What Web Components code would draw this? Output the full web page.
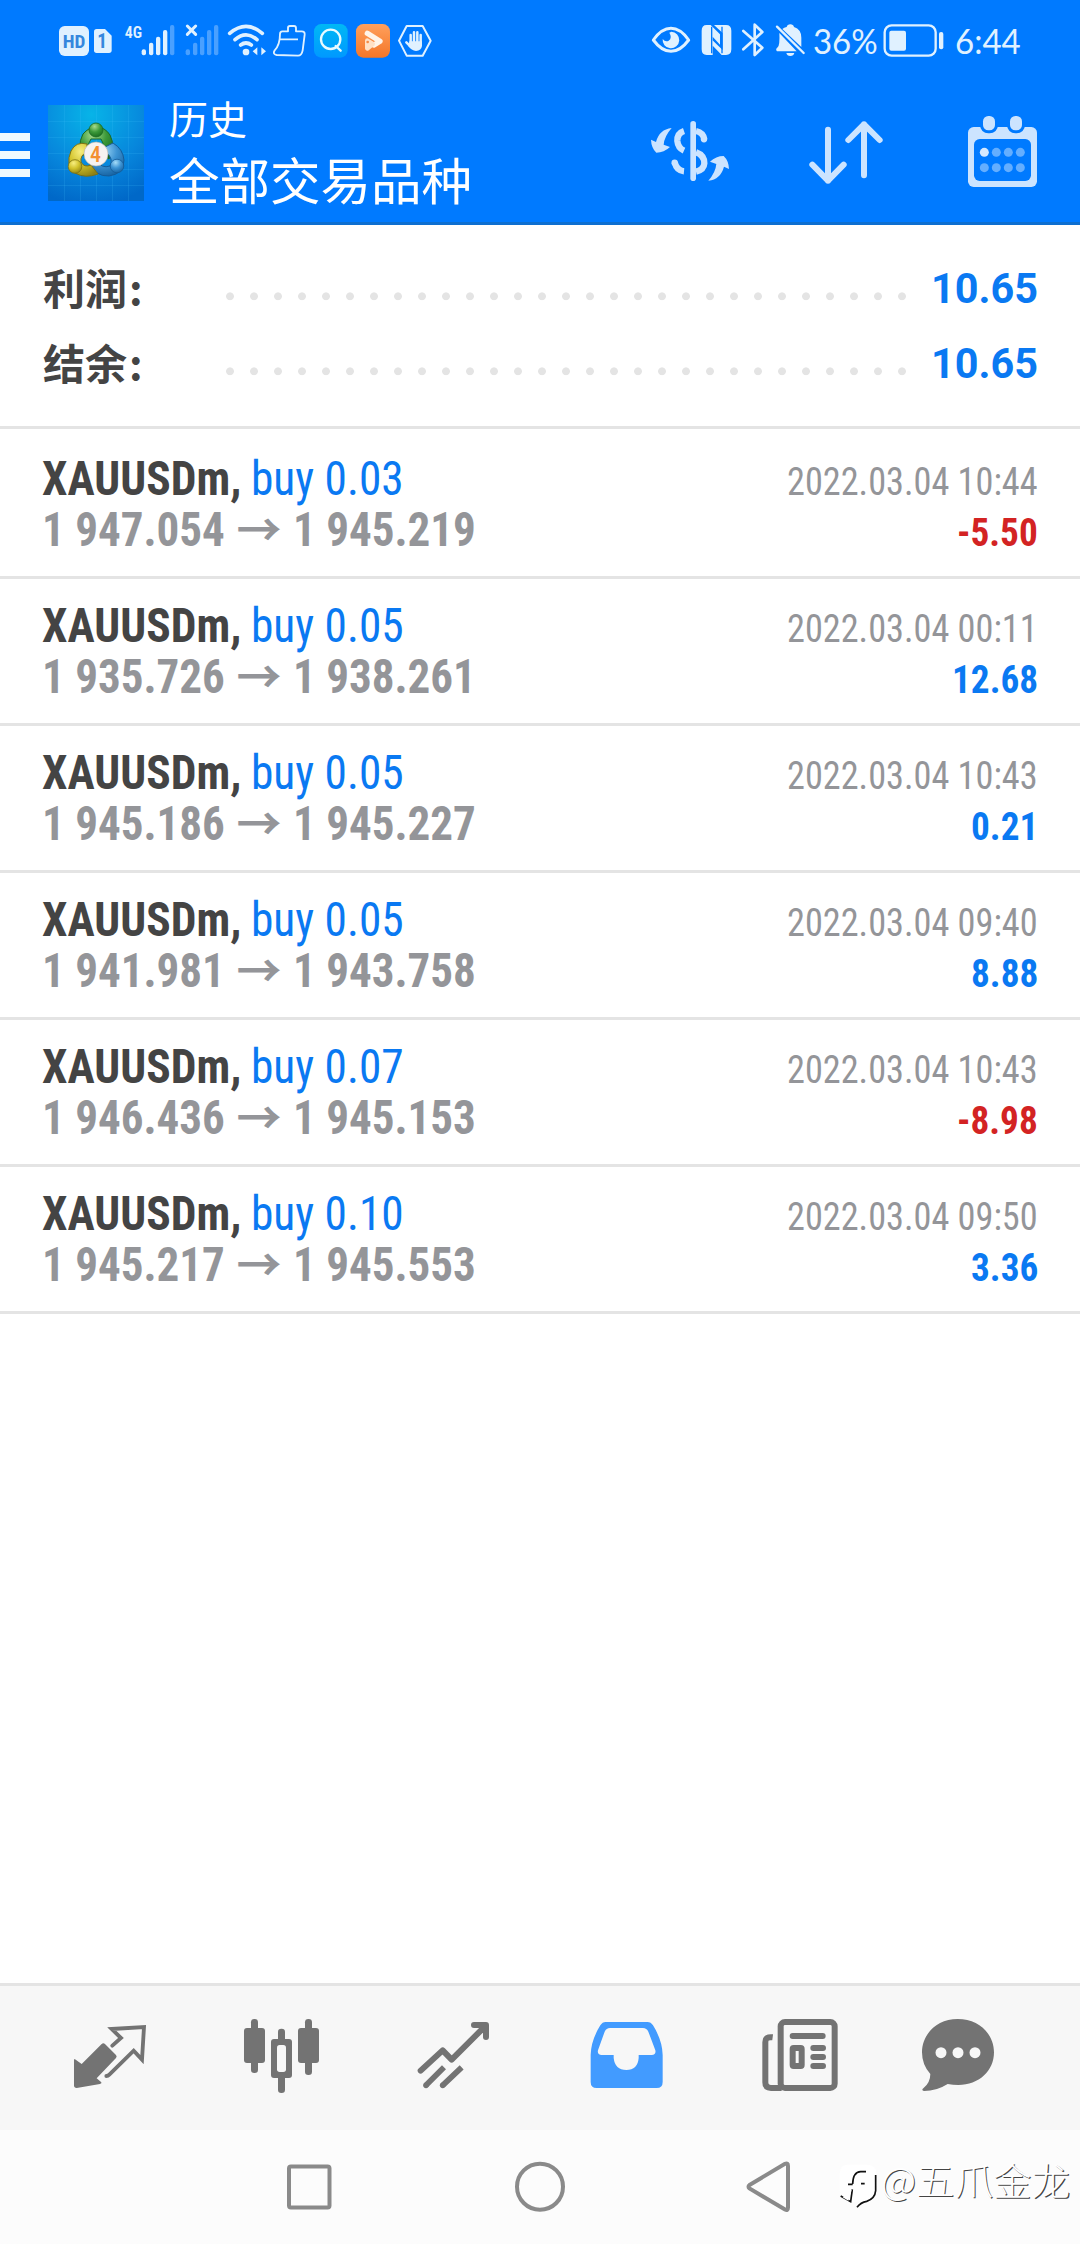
<!DOCTYPE html>
<html lang="zh-CN">
<head>
<meta charset="utf-8">
<title>历史</title>
<style>
body{margin:0;background:#fff;font-family:Roboto,"Noto Sans CJK SC",sans-serif}
</style>
</head>
<body>
<history-screen></history-screen>
<script>
const g = (x, y, body) => `<g transform="translate(${x} ${y}) scale(.33333)">${body}</g>`;
const L = '#e0f1ff', A = '#cce4ff', T = '#737373', B = '#007aff';
const bars = (dx, last) => [[305,118],[327,98],[348,80],[369,60],[390,45]].map(([x,y],i)=>
  `<rect x="${x+dx}" y="${y}" width="13" height="${136-y}" rx="6" fill="${L}" opacity="${last||i==4?.33:1}"/>`).join('');
const ICONS = {
  hd: g(40,10,`<rect x="57" y="48" width="90" height="90" rx="17" fill="${L}"/><text x="68" y="114" textLength="68" lengthAdjust="spacingAndGlyphs" font-size="54" font-weight="700" fill="#3587dd">HD</text>`),
  sim: g(40,10,`<path d="M170 57H195L215 77V121Q215 129 207 129H170Q162 129 162 121V65Q162 57 170 57Z" fill="${L}"/><text x="172" y="115" font-size="58" font-weight="700" fill="#3587dd">1</text>`),
  signal: g(40,10,`<text x="254" y="83" textLength="52" lengthAdjust="spacingAndGlyphs" font-size="52" font-weight="600" fill="${L}">4G</text>`+bars(0)),
  nosignal: g(40,10,`<path d="M442 48L467 73M467 48L442 73" stroke="${L}" stroke-width="9" stroke-linecap="round"/>`+bars(132,1)),
  wifi: g(40,10,`<g fill="none" stroke="${L}" stroke-width="11" stroke-linecap="round"><path d="M569 70Q618 28 667 70M585 89Q618 60 651 89M602 105Q618 93 634 105"/></g><circle cx="618" cy="126" r="10" fill="${L}"/><path d="M652 112V136L638 124ZM664 112V136L678 124Z" fill="${L}"/>`),
  clean: g(40,10,`<path d="M727 64H744V53Q744 48 750 48H762Q768 48 768 54V64H785Q795 64 794 74L788 121Q785 137 774 137L710 135Q697 133 704 121Q720 105 720 72Q720 64 727 64ZM720 88H774" fill="none" stroke="${L}" stroke-width="5.5" stroke-linejoin="round"/>`),
  find: `<defs><linearGradient id="f" x2="0" y2="1"><stop stop-color="#00b8f5"/><stop offset="1" stop-color="#0099ff"/></linearGradient></defs>`+g(40,10,`<rect x="822" y="42" width="101" height="101" rx="22" fill="url(#f)"/><circle cx="872" cy="88" r="29" fill="none" stroke="#e8faff" stroke-width="7"/><path d="M887 108L902 122" stroke="#e8faff" stroke-width="7" stroke-linecap="round"/>`),
  video: `<defs><linearGradient id="o" x2="0" y2="1"><stop stop-color="#ffa05c"/><stop offset="1" stop-color="#f47628"/></linearGradient></defs>`+g(40,10,`<rect x="948" y="42" width="102" height="101" rx="22" fill="url(#o)"/><path d="M982 70L1020 94L1002 105" fill="none" stroke="#fff4e8" stroke-width="16" stroke-linecap="round" stroke-linejoin="round"/><path d="M982 115V92L998 102Z" fill="#ffe0c4" stroke="#ffe0c4" stroke-width="14" stroke-linejoin="round"/><circle cx="983" cy="96" r="4" fill="#f58a44"/>`),
  hand: g(40,10,`<path d="M1100 48H1148L1172 92L1148 137H1100L1077 92Z" fill="none" stroke="${L}" stroke-width="6" stroke-linejoin="round"/><path d="M1112 75V98M1122 67V98M1132 67V98M1142 75V102M1099 97L1112 110" stroke="${L}" stroke-width="7.5" stroke-linecap="round"/><path d="M1108 94H1146V108Q1144 122 1128 123Q1114 122 1106 109Z" fill="${L}"/>`),
  eye: g(640,10,`<path d="M40 90Q65 55 93 55Q121 55 146 90Q121 124 93 124Q65 124 40 90Z" fill="none" stroke="${L}" stroke-width="9" stroke-linejoin="round"/><path d="M94 65A25 25 0 1 1 68 87Q76 97 86 92Q98 84 88 68Z" fill="${L}"/>`),
  nfc: g(640,10,`<path d="M200 45H212L240 73V104L218 80V135H200Q185 135 185 118V62Q185 45 200 45ZM222 45H258Q274 45 274 62V118Q274 135 258 135H245L216 105V89L248 120V69Z" fill="${L}"/><path d="M215 50V130M246 50V130" stroke="${B}" stroke-width="4"/>`),
  bt: g(640,10,`<path d="M310 63L367 113L344 135V44L367 66L310 118" fill="none" stroke="${L}" stroke-width="8" stroke-linejoin="round" stroke-linecap="round"/>`),
  mute: g(640,10,`<path d="M427 57L484 111V83Q484 58 462 51Q460 43 451 43Q442 43 440 51Q432 53 427 57ZM418 69L470 124H411Q405 119 413 112Q420 105 418 69ZM439 129H463Q461 138 451 138Q441 138 439 129Z" fill="${L}"/><path d="M411 50L491 129" stroke="${L}" stroke-width="7" stroke-linecap="round"/>`),
  battery: g(640,10,`<rect x="734" y="46" width="153" height="91" rx="21" fill="none" stroke="${L}" stroke-width="7"/><rect x="748" y="62" width="50" height="60" rx="6" fill="${L}"/><rect x="897" y="66" width="13" height="52" rx="6" fill="${L}"/>`),
  menu: `<path d="M0 133H30V141H0ZM0 151H30V159H0ZM0 169H30V177H0Z" fill="#f0faff"/>`,
  logo: `<defs><radialGradient id="bg" cx=".45" cy=".1" r=".95"><stop stop-color="#07b4e8"/><stop offset=".6" stop-color="#0786dc"/><stop offset="1" stop-color="#0068c8"/></radialGradient>
    ${[['g','#a8dc8e','#3c9a3a','#176a1c'],['y','#f7ee80','#d2c32c','#8f8214'],['b','#a5dcf8','#3d94d4','#14609f']].map(([n,a,b,c])=>`<radialGradient id="${n}" cx=".4" cy=".25" r=".8"><stop stop-color="${a}"/><stop offset=".5" stop-color="${b}"/><stop offset="1" stop-color="${c}"/></radialGradient>`).join('')}</defs>
    <rect width="96" height="96" fill="url(#bg)"/><path d="M16.500 0V96M32.500 0V96M48.500 0V96M64.500 0V96M80.500 0V96M0 16.500H96M0 32.500H96M0 48.500H96M0 64.500H96M0 80.500H96" stroke="#4cc4ff" stroke-opacity=".16"/>
    <path d="M37 52Q28 42 35 29Q41 22 48 22Q57 22 62 30Q68 42 61 54L53 50Q58 42 53 34L43 34Q38 42 41 48Z" fill="url(#g)" stroke="#1c6b26"/>
    <path d="M55 43L65 38Q75 44 76 55Q76 69 61 71Q47 72 40 56L47 55Q54 64 62 61Q66 54 58 47Z" fill="url(#b)" stroke="#155c98"/>
    <path d="M39 39Q28 36 23 46Q17 60 27 68Q37 74 50 69L43 60Q36 63 33 57Q32 50 39 47Z" fill="url(#y)" stroke="#7c7114"/>
    <circle cx="48" cy="25" r="7" fill="url(#g)" stroke="#1c6b26" stroke-width=".8"/><circle cx="27" cy="61.500" r="6.800" fill="url(#y)" stroke="#7c7114" stroke-width=".8"/><circle cx="69" cy="61" r="6.800" fill="url(#b)" stroke="#155c98" stroke-width=".8"/>
    <circle cx="48" cy="49" r="12" fill="#f6f3f1" stroke="#b9b4a9" stroke-width=".6"/><text x="42" y="56.500" font-size="22" font-weight="500" fill="#f39032">4</text>`,
  money: g(620,90,`<rect x="211" y="93" width="17" height="180" rx="8.500" fill="${A}"/><path d="M192 123Q171 130 172 153Q174 174 192 182M164 217Q170 242 192 244M228 123Q250 128 253 148M228 187Q253 196 253 220Q252 239 228 245" fill="none" stroke="${A}" stroke-width="19"/><circle cx="164" cy="218" r="9.500" fill="${A}"/><circle cx="252" cy="148" r="9.500" fill="${A}"/>
    <path d="M155 114Q118 118 108 156L93 149Q94 174 109 188Q132 188 150 171L131 164Q133 139 155 114Z" fill="${A}"/><path transform="rotate(180 210 193)" d="M155 114Q118 118 108 156L93 149Q94 174 109 188Q132 188 150 171L131 164Q133 139 155 114Z" fill="${A}"/>`),
  sort: g(620,90,`<path d="M624 119V272M577 224L624 272L671 224M732 256V103M685 150L732 103L779 150" fill="none" stroke="${A}" stroke-width="18" stroke-linecap="round" stroke-linejoin="round"/>`),
  calendar: g(620,90,`<rect x="1044" y="111" width="207" height="180" rx="17" fill="${A}"/><rect x="1062" y="147" width="171" height="126" rx="17" fill="${B}"/>${[1089,1170].map(x=>`<rect x="${x}" y="78" width="36" height="43" rx="16" fill="${A}" stroke="${B}" stroke-width="18" paint-order="stroke"/>`).join('')}${[187,233].map((y,r)=>[1093,1129,1165,1201].map((x,i)=>`<circle cx="${x}" cy="${y}" r="13.500" fill="#d5e9ff" opacity="${r+i?.47:1}"/>`).join('')).join('')}`),
  quotes: g(40,1975,`<path d="M104 252L125 267L185 207Q190 202 195 207L228 240Q232 244 228 249L170 310L184 322Q186 326 180 327L110 339Q102 339 102 331V254Z" fill="${T}"/><path d="M217 212L243 189L215 162L312 156L306 254L281 227L208 299Q204 303 199 303" fill="none" stroke="${T}" stroke-width="11.500" stroke-linejoin="miter" stroke-linecap="round"/>`),
  charts: g(40,1975,`<g fill="${T}"><rect x="633" y="132" width="21" height="162" rx="10"/><rect x="612" y="159" width="63" height="105" rx="9"/><rect x="795" y="132" width="21" height="168" rx="10"/><rect x="774" y="159" width="63" height="105" rx="9"/><rect x="714" y="161" width="21" height="193" rx="10"/><rect x="693" y="192" width="63" height="117" rx="9"/></g><rect x="711" y="210" width="27" height="81" rx="8" fill="#f7f7f7"/>`),
  trade: g(40,1975,`<path d="M1142 287L1208 226L1235 254L1337 152M1302 150H1338V186" fill="none" stroke="${T}" stroke-width="18" stroke-linecap="round" stroke-linejoin="round"/><path d="M1158 331L1212 277M1208 331L1265 277" stroke="${T}" stroke-width="17"/><circle cx="1158" cy="331" r="8.500" fill="${T}"/><circle cx="1208" cy="331" r="8.500" fill="${T}"/>`),
  history: g(560,1975,`<path fill-rule="evenodd" d="M137 141H262Q273 141 279 151Q307 196 308 240V321Q308 339 290 339H110Q92 339 92 321V240Q93 196 121 151Q127 141 137 141ZM150 159Q139 159 134 170L114 226Q111 239 125 240H161V249Q165 285 199 285Q233 285 236 249V240H275Q289 239 286 226L265 170Q260 159 249 159Z" fill="#429bff"/>`),
  news: g(560,1975,`<g fill="none" stroke="${T}" stroke-width="18"><rect x="662" y="141" width="162" height="198" rx="13"/><path d="M638 187Q616 184 616 202V322Q616 339 633 339H665"/><path d="M698 183H788M760 219H789M760 246H789M760 273H789" stroke-linecap="round"/><rect x="698" y="219" width="27" height="54" rx="3"/></g>`),
  chat: g(560,1975,`<path d="M1193 132C1257 132 1302 177 1302 232C1302 288 1257 330 1195 330Q1179 330 1163 327Q1130 348 1092 348Q1083 346 1090 340Q1111 323 1111 297Q1086 270 1086 232C1086 177 1131 132 1193 132Z" fill="${T}"/><g fill="#f7f7f7"><circle cx="1143" cy="233" r="16.500"/><circle cx="1194" cy="233" r="16.500"/><circle cx="1245" cy="233" r="16.500"/></g>`),
  recent: `<rect x="289" y="2166.500" width="40.500" height="41" rx="2" fill="none" stroke="#8a8a8a" stroke-width="4"/>`,
  home: `<circle cx="540" cy="2186.700" r="23" fill="none" stroke="#8a8a8a" stroke-width="4"/>`,
  back: `<path d="M749.500 2185L785 2163.800Q788 2162.500 788 2166V2207.500Q788 2211 785 2209.500L749.500 2188.500Q747.500 2186.700 749.500 2185Z" fill="none" stroke="#8a8a8a" stroke-width="4"/>`,
  brand: g(830,2140,`<path d="M50 74H113Q139 75 139 101V150Q138 178 112 184Q94 187 82 204Q81 193 91 184L62 187Q29 180 29 150V100Q30 75 50 74Z" fill="#fff"/><path d="M137 105V152Q135 176 110 184Q92 187 81 202M68 132Q69 96 92 95H108M54 133H68M93 131H104M67 148L62 185L32 168" fill="none" stroke="#111" stroke-width="5"/><path d="M65 149L55 182L38 172Z" fill="#fff"/>`)
};

class Base extends HTMLElement {
  connectedCallback() {
    if (!this.shadowRoot) this.attachShadow({mode:'open'}).innerHTML = this.view();
    this.ready?.();
  }
}

/* <app-icon name box="x y w h">: box is the icon's view box and natural size */
customElements.define('app-icon', class extends Base {
  view() {
    const box = this.getAttribute('box'), [, , w, h] = box.split(' ');
    return `<style>:host{display:block;flex:none;width:${w}px;height:${h}px}svg{display:block;overflow:hidden;font-family:"Roboto Condensed",Roboto,sans-serif}</style>
      <svg width="${w}" height="${h}" viewBox="${box}" aria-hidden="true">${ICONS[this.getAttribute('name')]}</svg>`;
  }
});

/* <fit-text w> sets its text to an exact advance width, <fit-text k> narrows it by a factor */
customElements.define('fit-text', class extends Base {
  view() {
    return `<style>:host{display:inline-block;white-space:pre;width:${this.getAttribute('w')}px}span{display:inline-block;transform-origin:0 50%}</style><span><slot></slot></span>`;
  }
  ready() {
    const s = this.shadowRoot.querySelector('span'), n = s.offsetWidth;
    const w = +this.getAttribute('w') || n * this.getAttribute('k');
    this.style.width = w + 'px';
    s.style.transform = `scaleX(${(w / n).toFixed(4)})`;
  }
});

customElements.define('status-bar', class extends Base {
  view() {
    const ic = (n, x, w) => `<app-icon name="${n}" box="${x} 0 ${w} 82"></app-icon>`;
    return `<style>:host{display:flex;height:82px;background:#007aff;color:#e0f1ff;justify-content:space-between;font:400 35px/80px Lato,sans-serif}
      div{display:flex}.l{padding-left:55px}.r{padding-right:59px}</style>
      <div class="l">${ic('hd',55,36)}${ic('sim',91,26)}${ic('signal',117,62)}${ic('nosignal',179,46)}${ic('wifi',225,44)}${ic('clean',269,41)}${ic('find',310,42)}${ic('video',352,42)}${ic('hand',394,42)}</div>
      <div class="r">${ic('eye',648,48)}${ic('nfc',696,41)}${ic('bt',737,33)}${ic('mute',770,43)}<fit-text w="65">36%</fit-text>${ic('battery',878,77)}<fit-text w="66">6:44</fit-text></div>`;
  }
});

customElements.define('title-bar', class extends Base {
  view() {
    return `<style>:host{display:flex;height:143px;box-sizing:border-box;background:#007aff;border-bottom:3px solid #0e6fd0;color:#fff;font-family:"Noto Sans CJK SC",sans-serif}
      .logo{margin:23px 24px 0 18px}.t{flex:1;padding:6px 0 0 1px}.a{font-size:39px;line-height:58px;height:58px}.b{font-size:50.500px;line-height:64px}</style>
      <app-icon name="menu" box="0 82 30 140"></app-icon>
      <app-icon class="logo" name="logo" box="0 0 96 96"></app-icon>
      <div class="t"><div class="a">历史</div><div class="b"><slot></slot></div></div>
      <app-icon name="money" box="630 82 120 140"></app-icon>
      <app-icon name="sort" box="750 82 165 140"></app-icon>
      <app-icon name="calendar" box="915 82 165 140"></app-icon>`;
  }
});

customElements.define('summary-row', class extends Base {
  view() {
    return `<style>:host{display:flex;height:75px;padding:0 42px;line-height:75px;font-size:42px;font-weight:700}
      .l{width:175px;padding-left:1px;font-family:"Noto Sans CJK SC",sans-serif;line-height:71px;color:#444}i{font-style:normal;margin-left:2px}
      .d{width:696px;background:radial-gradient(circle at 12px 45.300px,#e4e4e4 3.500px,transparent 4.300px) 0 0/24px 75px}
      .v{flex:1;text-align:right;color:#0a79f2}</style>
      <div class="l">${this.getAttribute('label')}<i>:</i></div><div class="d"></div><div class="v"><fit-text k=".985"><slot></slot></fit-text></div>`;
  }
});

customElements.define('deal-row', class extends Base {
  view() {
    const a = n => this.getAttribute(n), loss = a('profit')[0] === '-';
    const price = (v, w) => `<fit-text w="${w}">${v}</fit-text>`;
    return `<style>:host{display:flex;justify-content:space-between;height:147px;box-sizing:border-box;padding:21px 42px 0;border-bottom:3px solid #e4e4e4;font-family:"Roboto Condensed",Roboto,sans-serif;font-size:48px;line-height:51px}
      .l div{display:flex;height:51px}.s{font-weight:700;color:#444}.k{color:#0a79f2;margin-left:10px}.p{font-weight:700;color:#949599}
      .w{width:60px;padding-left:4px;text-align:center;font:700 45px/55px "Roboto Condensed","Noto Sans CJK SC",sans-serif}
      .r{padding-top:4px;font-size:39px;text-align:right}.t{color:#949599}.v{font-weight:700;color:${loss ? '#d32323' : '#0a79f2'}}</style>
      <div class="l"><div><fit-text class="s" w="199">XAUUSDm,</fit-text><fit-text class="k" w="153">buy ${a('lots')}</fit-text></div>
      <div class="p">${price(a('from'),183)}<span class="w">→</span><span style="width:4px"></span>${price(a('to'),183)}</div></div>
      <div class="r"><div class="t"><fit-text w="251">${a('time')}</fit-text></div><div class="v"><fit-text k=".955">${a('profit')}</fit-text></div></div>`;
  }
});

customElements.define('tab-bar', class extends Base {
  view() {
    const cells = [['quotes',0,196],['charts',196,171],['trade',367,173],['history',540,173],['news',713,166],['chat',879,201]];
    return `<style>:host{display:flex;background:#f7f7f7;border-top:3px solid #e4e4e4}</style>` +
      cells.map(([n,x,w]) => `<app-icon name="${n}" box="${x} 1986 ${w} 144"></app-icon>`).join('');
  }
});

customElements.define('nav-bar', class extends Base {
  view() {
    return `<style>:host{display:flex;background:#fcfcfc;height:114px}
      .m{font:300 37.500px/98px "Noto Sans CJK SC",sans-serif;color:#fff;text-shadow:1px 1px 0 #444}</style>
      <app-icon name="recent" box="0 2130 420 114"></app-icon><app-icon name="home" box="420 2130 240 114"></app-icon>
      <app-icon name="back" box="660 2130 170 114"></app-icon><app-icon name="brand" box="830 2130 51 114"></app-icon>
      <div class="m"><fit-text w="189">@五爪金龙</fit-text></div>`;
  }
});

customElements.define('history-screen', class extends Base {
  view() {
    const deals = [['0.03','1 947.054','1 945.219','10:44','-5.50'],['0.05','1 935.726','1 938.261','00:11','12.68'],['0.05','1 945.186','1 945.227','10:43','0.21'],
      ['0.05','1 941.981','1 943.758','09:40','8.88'],['0.07','1 946.436','1 945.153','10:43','-8.98'],['0.10','1 945.217','1 945.553','09:50','3.36']];
    return `<style>:host{display:flex;flex-direction:column;width:1080px;height:2244px;overflow:hidden}
      .sum{padding:26px 0 25px;border-bottom:3px solid #e4e4e4}.list{flex:1;padding-top:3px}</style>
      <status-bar></status-bar><title-bar>全部交易品种</title-bar>
      <div class="sum"><summary-row label="利润">10.65</summary-row><summary-row label="结余">10.65</summary-row></div>
      <div class="list">${deals.map(([l,f,t,h,p]) => `<deal-row lots="${l}" from="${f}" to="${t}" time="2022.03.04 ${h}" profit="${p}"></deal-row>`).join('')}</div>
      <tab-bar></tab-bar><nav-bar></nav-bar>`;
  }
});
</script>
</body>
</html>
